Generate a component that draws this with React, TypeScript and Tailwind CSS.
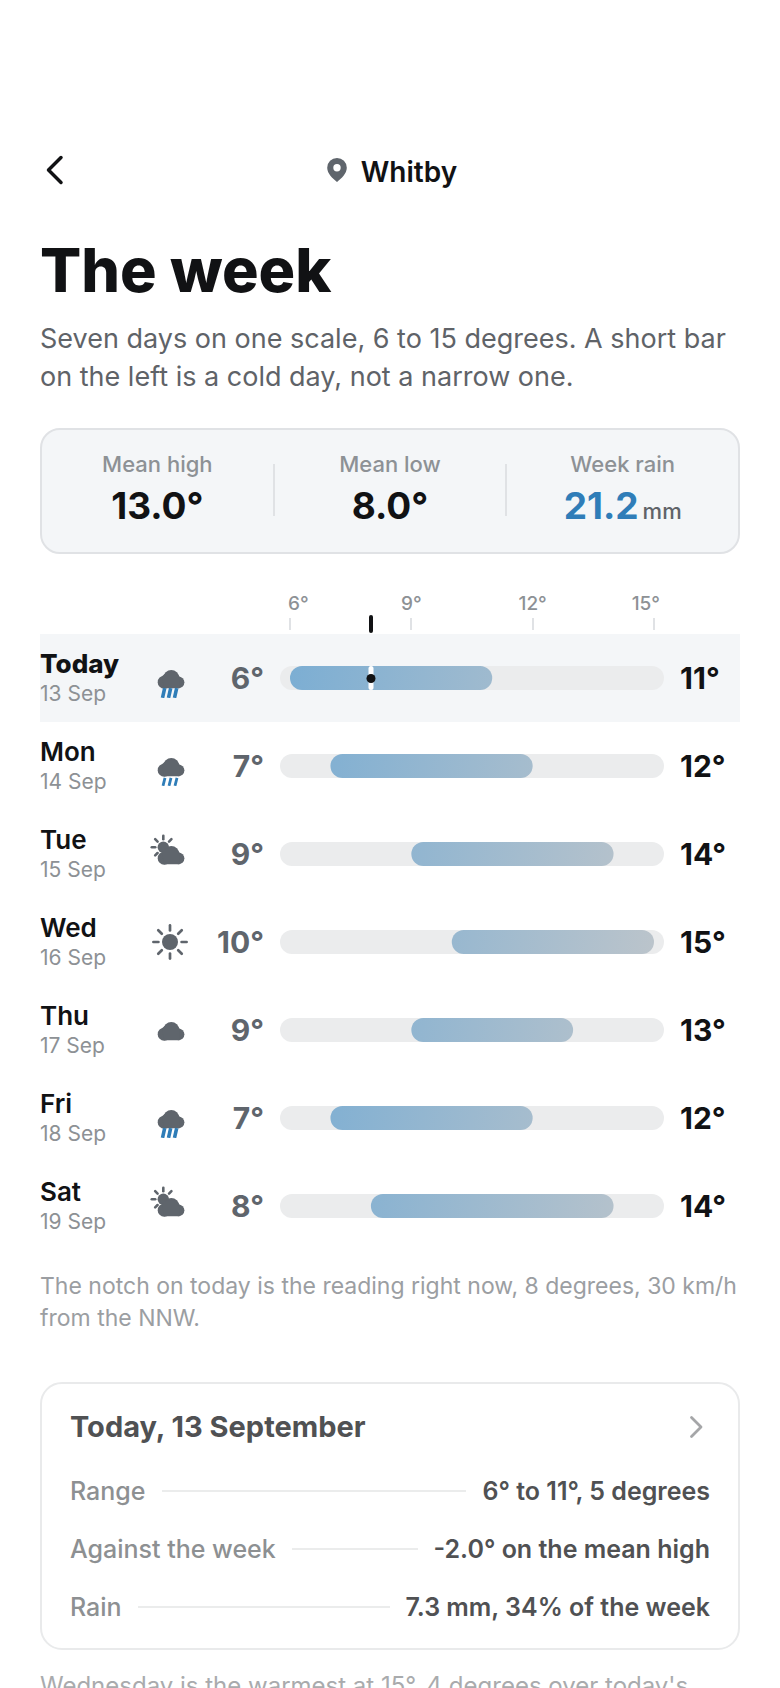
import React from "react";

type Sky = "rain" | "drizzle" | "partly" | "sun" | "cloud";

const scaleMin = 6;
const scaleMax = 15;
const now = 8;

const days: { name: string; date: string; sky: Sky; low: number; high: number }[] = [
  { name: "Today", date: "13 Sep", sky: "rain", low: 6, high: 11 },
  { name: "Mon", date: "14 Sep", sky: "drizzle", low: 7, high: 12 },
  { name: "Tue", date: "15 Sep", sky: "partly", low: 9, high: 14 },
  { name: "Wed", date: "16 Sep", sky: "sun", low: 10, high: 15 },
  { name: "Thu", date: "17 Sep", sky: "cloud", low: 9, high: 13 },
  { name: "Fri", date: "18 Sep", sky: "rain", low: 7, high: 12 },
  { name: "Sat", date: "19 Sep", sky: "partly", low: 8, high: 14 },
];

const stats = [
  { label: "Mean high", value: "13.0°" },
  { label: "Mean low", value: "8.0°" },
  { label: "Week rain", value: "21.2", unit: "mm" },
];

// the end labels stay inside the track, the middle ones sit on their tick
const ticks = [
  { deg: 6, align: "justify-start", label: "-ml-0.5" },
  { deg: 9, align: "justify-center", label: "" },
  { deg: 12, align: "justify-center", label: "" },
  { deg: 15, align: "justify-end", label: "-mr-1.5" },
];

const details = [
  { label: "Range", value: "6° to 11°, 5 degrees" },
  { label: "Against the week", value: "-2.0° on the mean high" },
  { label: "Rain", value: "7.3 mm, 34% of the week" },
];

const percent = (deg: number) =>
  `${((deg - scaleMin) / (scaleMax - scaleMin)) * 100}%`;

const Cloud = () => (
  <>
    <circle cx="14.2" cy="24.2" r="6.5" />
    <circle cx="21.3" cy="19.8" r="7.8" />
    <circle cx="28.5" cy="24.3" r="5.9" />
    <path d="M12 18.200l4-3.400h10.600l3 4v11.400H14z" />
  </>
);

const SkyIcon = ({ sky }: { sky: Sky }) => (
  <svg className="size-10" viewBox="0 0 40 40" fill="#5f656c" aria-hidden="true">
    {sky === "sun" && (
      <>
        <circle cx="20" cy="20" r="8" />
        <g stroke="#5f656c" strokeWidth="2.7" strokeLinecap="round">
          {[0, 45, 90, 135, 180, 225, 270, 315].map((r) => (
            <path key={r} d="M20 3.400v5" transform={`rotate(${r} 20 20)`} />
          ))}
        </g>
      </>
    )}
    {sky === "partly" && (
      <>
        <circle cx="13.3" cy="13.3" r="5.7" />
        <g stroke="#5f656c" strokeWidth="2.6" strokeLinecap="round">
          {[-135, -90, -45, 0, 45].map((r) => (
            <path key={r} d="M13.300 1.800v3.400" transform={`rotate(${r} 13.3 13.3)`} />
          ))}
        </g>
      </>
    )}
    {sky !== "sun" && <Cloud />}
    {sky === "rain" && (
      <path d="M14.700 30.200l-2.200 9.600M20.700 30.200l-2.200 9.600M26.700 30.200l-2.200 9.600" stroke="#2f7db8" strokeWidth="3.6" />
    )}
    {sky === "drizzle" && (
      <path d="M15 31.800l-2 8M21 31.800l-2 8M27 31.800l-2 8" stroke="#2f7db8" strokeWidth="2.8" />
    )}
  </svg>
);

const Stats = () => (
  <dl className="mt-8 flex items-center rounded-[20px] border-2 border-[#e0e2e5] bg-[#f4f6f8] pt-4.5 pb-5">
    {stats.map((stat, index) => (
      <React.Fragment key={stat.label}>
        {index > 0 && <div className="h-[52px] w-0.5 bg-[#e0e2e5]" />}
        <div className="flex flex-1 flex-col items-center">
          <dt className="text-[22px] leading-8 font-medium text-[#8d9195]">{stat.label}</dt>
          <dd className="flex h-[52px] items-baseline gap-1 text-[37px] leading-[52px] font-bold">
            <span className={stat.unit ? "text-[#2f7db8]" : ""}>{stat.value}</span>
            {stat.unit && (
              <span className="text-[22px] leading-8 font-medium text-[#5f6368]">{stat.unit}</span>
            )}
          </dd>
        </div>
      </React.Fragment>
    ))}
  </dl>
);

const Axis = () => (
  <div className="mt-9 mr-[76px] ml-[240px] h-11 px-2.5">
    <div className="relative h-full">
      {ticks.map((tick) => (
        <div
          key={tick.deg}
          className={`absolute top-0 flex w-0 ${tick.align}`}
          style={{ left: percent(tick.deg) }}
        >
          <span className={`text-[19px] leading-7 font-medium text-[#8d9195] ${tick.label}`}>
            {tick.deg}°
          </span>
          <span className="absolute top-7 -left-px h-3 w-0.5 bg-[#e0e2e5]" />
        </div>
      ))}
      <span
        className="absolute bottom-px h-[18px] w-1 -translate-x-1/2 rounded-full bg-[#111214]"
        style={{ left: percent(now) }}
      />
    </div>
  </div>
);

const Range = ({ low, high, current }: { low: number; high: number; current: boolean }) => (
  <div className="h-6 flex-1 rounded-full bg-[#ebeced] px-2.5">
    <div className="relative h-full">
      {/* one gradient over the whole scale, clipped to the day's range */}
      <div
        className="absolute inset-0 bg-linear-[100deg] from-[#7caed3] to-[#bbc4cb]"
        style={{
          clipPath: `inset(0 calc(100% - ${percent(high)}) 0 ${percent(low)} round 12px)`,
        }}
      />
      {current && (
        <span
          className="absolute inset-y-0 flex w-[5px] -translate-x-1/2 items-center justify-center rounded-full bg-white"
          style={{ left: percent(now) }}
        >
          <span className="size-[9px] shrink-0 rounded-full bg-[#111214]" />
        </span>
      )}
    </div>
  </div>
);

const App = () => {
  return (
    <main className="min-h-screen bg-white px-10 pt-[140px] font-['Inter',sans-serif] text-[#111214]">
      <header className="grid h-16 grid-cols-[1fr_auto_1fr] items-center">
        <button type="button" aria-label="Back" className="mb-1 w-8">
          <svg className="h-8 w-7" viewBox="0 0 28 32" fill="none" stroke="#111214" strokeWidth="3.500" strokeLinecap="round" strokeLinejoin="round">
            <path d="M21 3.500L8.500 16 21 28.500" />
          </svg>
        </button>
        <div className="flex items-center gap-3.5 pl-1">
          <svg className="mb-1 h-6 w-5" viewBox="0 0 20 24" fill="#5f656c" fillRule="evenodd" aria-hidden="true">
            <path d="M10 0a9.800 9.800 0 0 1 9.800 9.800c0 5.700-5.300 10.700-9.800 14.200C5.500 20.500.2 15.500.2 9.800A9.800 9.800 0 0 1 10 0zm0 6a3.700 3.700 0 1 0 0 7.400A3.700 3.700 0 0 0 10 6z" />
          </svg>
          <span className="text-[28px] leading-9 font-semibold">Whitby</span>
        </div>
      </header>

      <h1 className="mt-7 text-[61px] leading-[76px] font-extrabold">The week</h1>
      <p className="mt-3 text-[27px] leading-[38px] text-[#5f6368]">
        Seven days on one scale, 6 to 15 degrees. A short bar on the left is a
        cold day, not a narrow one.
      </p>

      <Stats />
      <Axis />

      <ul>
        {days.map((day, index) => (
          <li
            key={day.name}
            className={index === 0 ? "flex h-22 items-center bg-[#f4f6f8]" : "flex h-22 items-center"}
          >
            <div className="w-[110px]">
              <div className={index === 0 ? "text-[26px] leading-8 font-extrabold" : "text-[26px] leading-8 font-semibold"}>
                {day.name}
              </div>
              <div className="text-[21px] leading-7 text-[#8d9195]">{day.date}</div>
            </div>
            <SkyIcon sky={day.sky} />
            <div className="w-[74px] text-right text-[30px] leading-9 font-bold text-[#5f656c]">{day.low}°</div>
            <div className="flex flex-1 px-4">
              <Range low={day.low} high={day.high} current={index === 0} />
            </div>
            <div className="w-15 text-[30px] leading-9 font-bold">{day.high}°</div>
          </li>
        ))}
      </ul>

      <p className="mt-5 text-[23px] leading-8 text-[#9b9ea2]">
        The notch on today is the reading right now, 8 degrees, 30 km/h from the
        NNW.
      </p>

      <section className="mt-12 rounded-[22px] border-2 border-[#e9eaeb] px-7 pt-[22px] pb-3">
        <div className="flex items-center justify-between">
          <h2 className="text-[29px] leading-[42px] font-bold text-[#505153]">Today, 13 September</h2>
          <svg className="h-6 w-7" viewBox="0 0 28 24" fill="none" stroke="#a5a6a8" strokeWidth="2.800" strokeLinecap="round" strokeLinejoin="round" aria-hidden="true">
            <path d="M9.500 2.500L19 12l-9.500 9.500" />
          </svg>
        </div>
        <dl className="mt-3.5">
          {details.map((item) => (
            <div className="flex h-[58px] items-center gap-4" key={item.label}>
              <dt className="text-[25px] leading-8 font-medium text-[#8d9092]">{item.label}</dt>
              <div aria-hidden="true" className="h-0.5 flex-1 bg-[#ebecec]" />
              <dd className="text-[25px] leading-8 font-semibold text-[#505153]">{item.value}</dd>
            </div>
          ))}
        </dl>
      </section>

      <p className="mt-5 text-[24px] leading-8 text-[#a9abad]">
        Wednesday is the warmest at 15°, 4 degrees over today's
      </p>
    </main>
  );
};

export default App;
